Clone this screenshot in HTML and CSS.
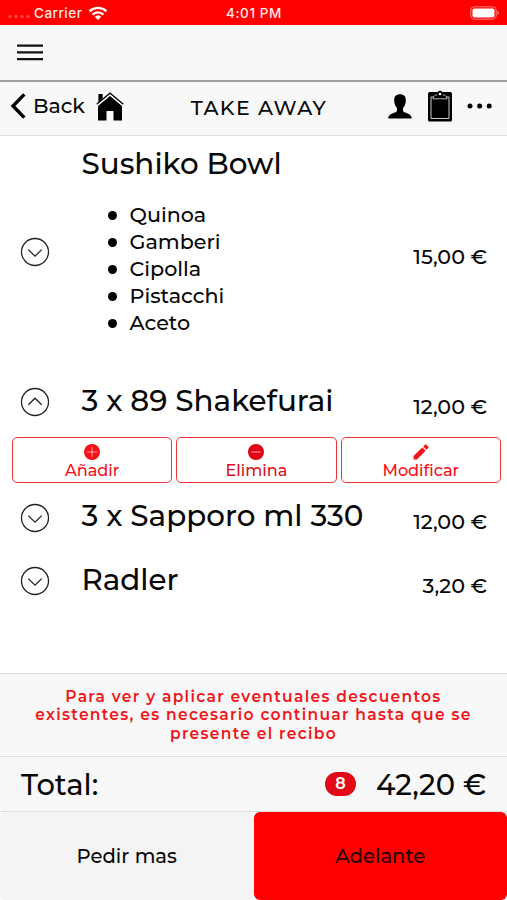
FILE: index.html
```
<!DOCTYPE html>
<html lang="es">
<head>
<meta charset="utf-8">
<title>Take Away</title>
<link rel="stylesheet" href="styles.css">
</head>
<body>
<svg class="defs" aria-hidden="true">
  <symbol id="down" viewBox="0 0 30 30"><circle cx="15" cy="15" r="13.5"/><path d="M8.3 12.6 15 19.2l6.7-6.6"/></symbol>
  <symbol id="up" viewBox="0 0 30 30"><circle cx="15" cy="15" r="13.5"/><path d="M8.3 17.8 15 11.2l6.7 6.6"/></symbol>
</svg>
<div class="app">
  <header class="status">
    <div class="status-left">
      <span class="dots"><i></i><i></i><i></i><i></i></span>
      <span class="carrier">Carrier</span>
      <svg class="wifi" width="20" height="15" viewBox="0 0 20 15" fill="none" stroke="#fff" stroke-width="2.4"><path d="M1.6 5.3a12 12 0 0 1 16.8 0M4.6 8.6a7.7 7.7 0 0 1 10.8 0"/><path d="M10 14 6.7 10.8a4.8 4.8 0 0 1 6.6 0z" fill="#fff" stroke="none"/></svg>
    </div>
    <span class="time">4:01 PM</span>
    <svg class="battery" width="30" height="14" viewBox="0 0 30 14"><rect x=".8" y=".8" width="25.4" height="12.4" rx="3.4" fill="none" stroke="#ff8080"/><rect x="2.5" y="2.5" width="22" height="9" rx="1.8" fill="#fff"/><path d="M27.5 4.8c2 .8 2 3.6 0 4.4z" fill="#ff8080"/></svg>
  </header>
  <nav class="menu"><svg width="26" height="17" viewBox="0 0 26 17" stroke="#111" stroke-width="2.1"><path d="M0 1.6h26M0 8.4h26M0 15.1h26"/></svg></nav>
  <div class="toolbar">
    <div class="tools-left">
      <svg width="16" height="26" viewBox="0 0 16 26" fill="none" stroke="#000" stroke-width="3.4"><path d="M14.3 1.4 3 13l11.3 11.6"/></svg>
      <span class="back">Back</span>
      <svg class="home" width="28" height="29" viewBox="0 0 28 29"><path d="M2.4 2h4.2v5L2.4 10.8z"/><path d="M.7 12.2 14 1.2l13.3 11" fill="none" stroke="#000" stroke-width="1.3"/><path d="M2 14.1 14 4l12 10.1V28.500h-8.500v-9.500h-7v9.500H2z"/><path d="M1.2 13.500 14 2.900l12.800 10.600" fill="none" stroke="#f8f8f8" stroke-width="1"/></svg>
    </div>
    <h1 class="heading">TAKE AWAY</h1>
    <div class="tools-right">
      <svg width="24" height="25" viewBox="0 0 24 25"><path d="M12 .3c4 0 6.1 2.500 5.800 6.200-.1 3-.9 5.400-2.500 7.200-.6.800-.5 3.500.6 4.300 3 1.600 7.500 1.800 7.900 6.400H.2c.4-4.600 4.900-4.800 7.900-6.400 1.100-.8 1.200-3.500.6-4.300-1.600-1.800-2.400-4.200-2.500-7.200C5.900 2.800 8 .3 12 .3z"/></svg>
      <svg class="clip" width="24" height="32" viewBox="0 0 24 32"><rect y="2" width="24" height="29.500" rx="1.500"/><path d="M6.500 7H3v21.500h18V7h-3.500" fill="none" stroke="#ccc"/><path d="M5 8.800c.2-3 2.200-3.600 4-4C9.200 2 10 .8 12 .8s2.800 1.200 3 4c1.800.4 3.800 1 4 4z"/><path d="M9 4.800c-1.800.4-3.800 1-4 4h14c-.2-3-2.200-3.600-4-4" fill="none" stroke="#ccc" stroke-width=".9"/><circle cx="12" cy="4" r="1.300" fill="#eee"/></svg>
      <svg class="more" width="26" height="6" viewBox="0 0 26 6"><circle cx="3" cy="3" r="2.500"/><circle cx="12.600" cy="3" r="2.500"/><circle cx="22.200" cy="3" r="2.500"/></svg>
    </div>
  </div>

  <main class="order">
    <section class="item item-tall">
      <svg class="toggle"><use href="#down"/></svg>
      <div class="detail">
        <h2 class="name">Sushiko Bowl</h2>
        <ul class="extras">
          <li>Quinoa</li>
          <li>Gamberi</li>
          <li>Cipolla</li>
          <li>Pistacchi</li>
          <li>Aceto</li>
        </ul>
      </div>
      <span class="price">15,00 €</span>
    </section>
    <section class="item item-open">
      <svg class="toggle"><use href="#up"/></svg>
      <h2 class="name">3 x 89 Shakefurai</h2>
      <span class="price">12,00 €</span>
    </section>
    <div class="actions">
      <button class="action"><svg width="16" height="16" viewBox="0 0 16 16"><circle cx="8" cy="8" r="8"/><path d="M3 8h10M8 3v10" stroke="#ffa0a0"/></svg><span>Añadir</span></button>
      <button class="action deep"><svg width="16" height="16" viewBox="0 0 16 16"><circle cx="8" cy="8" r="8"/><path d="M3 8h10" stroke="#ffa0a0"/></svg><span>Elimina</span></button>
      <button class="action"><svg width="16" height="16" viewBox="0 0 16 16"><path d="M.6 15.4v-3.300L9.300 3.400l3.300 3.300-8.700 8.700zM10.200 2.500 12 .8c.4-.4 1-.4 1.400 0l1.900 1.900c.4.400.4 1 0 1.400l-1.800 1.700z"/></svg><span>Modificar</span></button>
    </div>
    <section class="item">
      <svg class="toggle"><use href="#down"/></svg>
      <h2 class="name">3 x Sapporo ml 330</h2>
      <span class="price">12,00 €</span>
    </section>
    <section class="item">
      <svg class="toggle"><use href="#down"/></svg>
      <h2 class="name">Radler</h2>
      <span class="price">3,20 €</span>
    </section>
  </main>

  <p class="notice">Para ver y aplicar eventuales descuentos<br>existentes, es necesario continuar hasta que se<br>presente el recibo</p>
  <div class="total">
    <span class="total-label">Total:</span>
    <span class="badge">8</span>
    <span class="total-sum">42,20 €</span>
  </div>
  <footer class="bottom">
    <button class="more-btn">Pedir mas</button>
    <button class="next-btn">Adelante</button>
  </footer>
</div>
</body>
</html>
```
FILE: styles.css
```
* { box-sizing: border-box; }
body { margin: 0; background: #fff; color: #080808; font-family: Montserrat, Inter, "Liberation Sans", sans-serif; font-weight: 500; }
h1, h2, p, ul { margin: 0; padding: 0; font-weight: 500; }
button { font: inherit; color: inherit; padding: 0; }
svg { display: block; flex: none; }
.defs { display: none; }
.app { width: 507px; height: 900px; display: flex; flex-direction: column; overflow: hidden; }

.status { height: 25px; background: #f00; color: #ffe8e8; display: grid; grid-template-columns: 1fr auto 1fr; align-items: center; padding: 1px 7px 0 8px; font-family: Inter, "Liberation Sans", sans-serif; font-size: 13.5px; font-weight: 500; }
.status-left { display: flex; align-items: center; }
.dots { display: flex; gap: 2px; width: 26px; padding-top: 7px; }
.dots i { width: 4px; height: 3px; border-radius: 2px; background: #ff4040; }
.carrier { letter-spacing: .5px; width: 54px; }
.time { letter-spacing: .6px; }
.battery { justify-self: end; }

.menu { height: 57px; padding: 19px 0 0 17px; background: #f8f8f8; border-bottom: 2px solid #9d9d9d; }
.toolbar { height: 54px; background: #f8f8f8; border-bottom: 1px solid #ddd; display: grid; grid-template-columns: 150px 1fr 150px; align-items: center; padding: 0 14px 0 10px; }
.tools-left { display: flex; align-items: center; padding-bottom: 6px; }
.back { font-size: 20.5px; width: 62px; padding: 0 0 1px 7px; }
.home { margin: 2px 0 0 8px; }
.heading { font-size: 20.5px; letter-spacing: 1.35px; text-align: center; white-space: nowrap; padding-left: 15px; padding-bottom: 2px; }
.tools-right { display: flex; align-items: center; justify-content: flex-end; padding-bottom: 5px; }
.clip { margin: 0 15px 0 16px; }

.order { flex: 1; }
.item { height: 63.5px; display: grid; grid-template-columns: 61.5px 1fr auto; align-items: center; padding: 0 20px; }
.item-tall { height: 232px; }
.item-open { height: 68px; }
.toggle { width: 30px; height: 30px; fill: none; stroke: #222; stroke-width: 1.3; }
.name { font-size: 29.4px; line-height: 36px; padding-bottom: 3px; white-space: nowrap; }
.price { font-size: 20.7px; padding-top: 8px; }
.detail { align-self: start; padding-top: 10px; }
.extras { list-style: none; margin-top: 16px; }
.extras li { display: flex; align-items: center; font-size: 20.7px; line-height: 27px; }
.extras li::before { content: ""; width: 9px; height: 9px; border-radius: 50%; background: #000; margin: 2px 13px 0 26px; }

.actions { height: 50px; display: grid; grid-template-columns: repeat(3, 1fr); gap: 4px; padding: 1px 6px 3px 12px; }
.action { background: #fff; border: 1.5px solid #f0353a; border-radius: 5px; color: #f5101a; fill: #f5101a; display: flex; flex-direction: column; align-items: center; padding-top: 6px; font-size: 16.1px; line-height: 21px; }
.deep { color: #dc1025; fill: #e00018; }

.notice { height: 83px; border-top: 1px solid #ddd; background: #f8f8f8; color: #f01518; text-align: center; font-size: 15.5px; font-weight: 600; line-height: 18.3px; letter-spacing: 1.3px; padding-top: 14px; white-space: nowrap; }
.total { height: 56px; border: solid #ddd; border-width: 1px 0; background: #f8f8f8; display: flex; align-items: center; padding: 0 21px; font-size: 29px; }
.total-label { margin-right: auto; }
.badge { width: 31px; height: 24px; border-radius: 12px; background: #e30a17; color: #fff; font-size: 16px; font-weight: 600; line-height: 24px; text-align: center; margin-right: 20px; }
.bottom { height: 88px; display: grid; grid-template-columns: 1fr 1fr; font-size: 19.6px; }
.more-btn { border: 0; background: #f4f4f4; border-radius: 5px; }
.next-btn { border: 0; background: #f00; border-radius: 6px; color: #260000; }
```
